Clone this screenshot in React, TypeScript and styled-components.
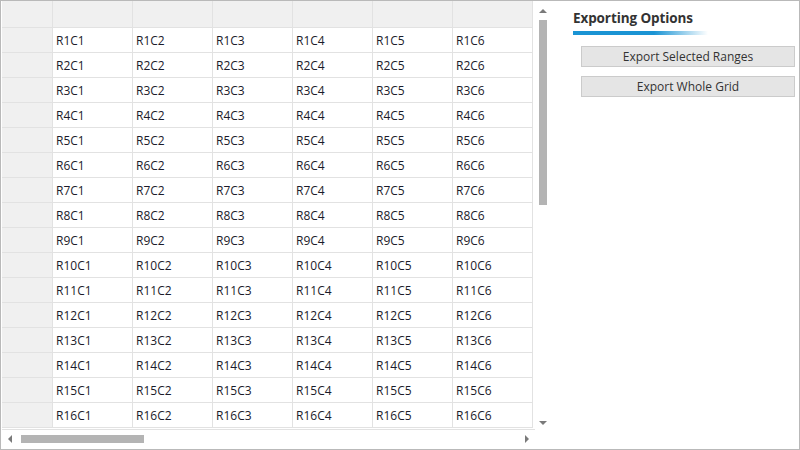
import React from "react";
import styled, { createGlobalStyle } from "styled-components";

const Global = createGlobalStyle`
  html, body { margin: 0; padding: 0; background: #fff; }
  body { font-family: "Open Sans", "Noto Sans", sans-serif; }
`;

const Frame = styled.div`
  width: 800px;
  height: 450px;
  box-sizing: border-box;
  border: 1px solid #b9b9b9;
  display: flex;
  background: #fff;
  overflow: hidden;
`;

const GridArea = styled.div`
  width: 549px;
  flex: none;
  display: grid;
  grid-template-columns: 533px 15px;
  grid-template-rows: 429px 19px;
  padding-left: 1px;
  box-sizing: border-box;
`;

const Viewport = styled.div`
  grid-column: 1;
  grid-row: 1;
  overflow: hidden;
  border-bottom: 1px solid #e2e2e2;
  box-sizing: border-box;
`;

const Table = styled.div`
  display: grid;
  grid-template-columns: 51px repeat(6, 80px);
  grid-template-rows: 27px;
  grid-auto-rows: 25px;
`;

const Cell = styled.div<{ $head?: boolean }>`
  box-sizing: border-box;
  border-right: 1px solid #e2e2e2;
  border-bottom: 1px solid #e2e2e2;
  background: ${(p) => (p.$head ? "#f0f0f0" : "#fff")};
  font-size: 12px;
  color: #1b1b2a;
  padding-left: 3px;
  display: flex;
  align-items: center;
  white-space: nowrap;
`;

const VScroll = styled.div`
  grid-column: 2;
  grid-row: 1;
  display: flex;
  flex-direction: column;
  align-items: center;
  padding-top: 8px;
`;

const VThumb = styled.div`
  width: 8px;
  height: 185px;
  margin-top: 7px;
  background: #b4b4b4;
`;

const Spacer = styled.div`
  flex: 1;
`;

const HScroll = styled.div`
  grid-column: 1;
  grid-row: 2;
  display: flex;
  align-items: center;
  padding: 0 6px 2px 6px;
`;

const HThumb = styled.div`
  width: 123px;
  height: 8px;
  margin-left: 9px;
  background: #b4b4b4;
`;

const Arrow = styled.svg`
  display: block;
  flex: none;
`;

const Panel = styled.div`
  flex: 1;
  padding: 8px 4px 0 23px;
  display: flex;
  flex-direction: column;
`;

const Title = styled.div`
  font-family: "Open Sans", sans-serif;
  font-weight: 700;
  font-size: 13.5px;
  color: #333;
  letter-spacing: -0.1px;
  line-height: 19px;
`;

const TitleBar = styled.div`
  width: 135px;
  height: 4px;
  margin-top: 3px;
  background: linear-gradient(to right, #1a94d4 0%, #1a94d4 60%, rgba(26, 148, 212, 0) 100%);
`;

const Buttons = styled.div`
  display: flex;
  flex-direction: column;
  gap: 9px;
  margin-top: 11px;
  padding-left: 8px;
`;

const Button = styled.button`
  height: 21px;
  width: 214px;
  box-sizing: border-box;
  border: 1px solid #cbcbcb;
  background: #e5e5e5;
  font-family: "Open Sans", sans-serif;
  font-size: 12px;
  color: #333;
  padding: 0;
  cursor: pointer;
`;

const cols = [1, 2, 3, 4, 5, 6];
const rows = Array.from({ length: 16 }, (_, i) => i + 1);

export default function App() {
  return (
    <>
      <Global />
      <Frame>
        <GridArea>
          <Viewport>
            <Table>
              <Cell $head />
              {cols.map((c) => (
                <Cell key={"h" + c} $head />
              ))}
              {rows.map((r) => (
                <React.Fragment key={r}>
                  <Cell $head />
                  {cols.map((c) => (
                    <Cell key={c}>{`R${r}C${c}`}</Cell>
                  ))}
                </React.Fragment>
              ))}
            </Table>
          </Viewport>
          <VScroll>
            <Arrow width="8" height="4" viewBox="0 0 8 4">
              <path d="M0 4 L4 0 L8 4 Z" fill="#7a7a7a" />
            </Arrow>
            <VThumb />
            <Spacer />
            <Arrow width="8" height="4" viewBox="0 0 8 4" style={{ marginBottom: 5 }}>
              <path d="M0 0 L4 4 L8 0 Z" fill="#7a7a7a" />
            </Arrow>
          </VScroll>
          <HScroll>
            <Arrow width="4" height="8" viewBox="0 0 4 8">
              <path d="M4 0 L0 4 L4 8 Z" fill="#7a7a7a" />
            </Arrow>
            <HThumb />
            <Spacer />
            <Arrow width="4" height="8" viewBox="0 0 4 8">
              <path d="M0 0 L4 4 L0 8 Z" fill="#7a7a7a" />
            </Arrow>
          </HScroll>
        </GridArea>
        <Panel>
          <Title>Exporting Options</Title>
          <TitleBar />
          <Buttons>
            <Button>Export Selected Ranges</Button>
            <Button>Export Whole Grid</Button>
          </Buttons>
        </Panel>
      </Frame>
    </>
  );
}
